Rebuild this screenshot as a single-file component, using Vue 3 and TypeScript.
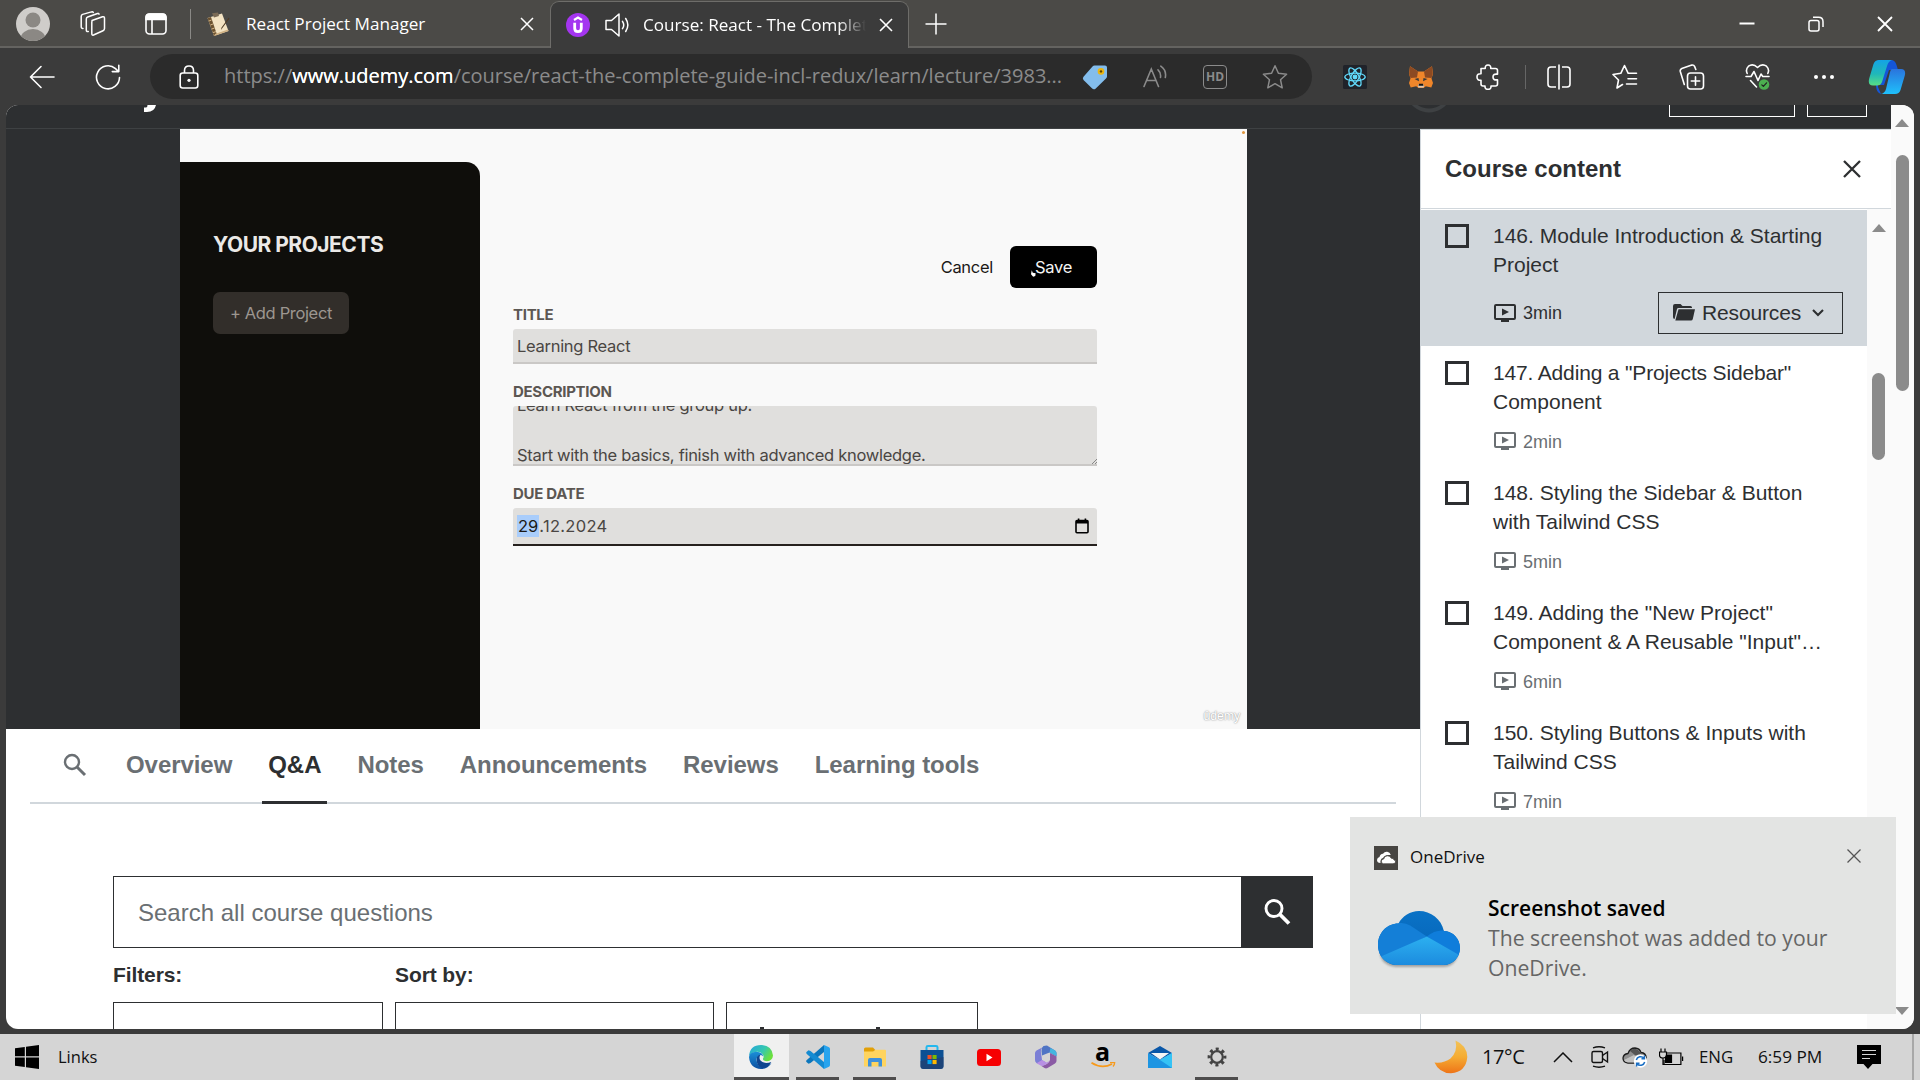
<script setup lang="ts">
interface Lecture {
  lines: string[]
  minutes: number
  current?: boolean
}

const lectures: Lecture[] = [
  { lines: ['146. Module Introduction & Starting', 'Project'], minutes: 3, current: true },
  { lines: ['147. Adding a "Projects Sidebar"', 'Component'], minutes: 2 },
  { lines: ['148. Styling the Sidebar & Button', 'with Tailwind CSS'], minutes: 5 },
  { lines: ['149. Adding the "New Project"', 'Component & A Reusable "Input"…'], minutes: 6 },
  { lines: ['150. Styling Buttons & Inputs with', 'Tailwind CSS'], minutes: 7 },
]

const tabs: string[] = ['Overview', 'Q&A', 'Notes', 'Announcements', 'Reviews', 'Learning tools']
const activeTab = 'Q&A'
</script>

<template>
  <div class="screen">
    <header class="tabstrip">
      <div class="strip-btn avatar">
        <svg width="34" height="34" viewBox="0 0 34 34">
          <defs><clipPath id="av"><circle cx="17" cy="17" r="17" /></clipPath></defs>
          <g clip-path="url(#av)">
            <rect width="34" height="34" fill="#cfcdca" />
            <circle cx="17" cy="13" r="7.5" fill="#8b8884" />
            <ellipse cx="17" cy="32" rx="12.5" ry="10" fill="#8b8884" />
          </g>
        </svg>
      </div>
      <div class="strip-btn ws">
        <svg width="26" height="26" viewBox="0 0 26 26" fill="none" stroke="#fff" stroke-width="1.5" stroke-linejoin="round" stroke-linecap="round">
          <path d="M12 9.5 L22.5 5.8 Q24.5 5.3 24.5 7.3 V17.5 Q24.5 19 23 19.7 L13.5 24 Q11.8 24.6 11.8 22.6 V11 Q11.8 9.8 13 9.2Z" />
          <path d="M8.3 20.5 Q6.3 21 6.3 19 V8 Q6.3 6.5 7.7 6 L17.5 2.5 Q18.8 2.2 19 3.2" />
          <path d="M3 17.5 Q1.2 17.6 1.2 15.5 V5.5 Q1.2 4 2.6 3.4 L11.5 .9 Q13 .7 13.3 1.5" />
        </svg>
      </div>
      <div class="strip-btn vt">
        <svg width="22" height="22" viewBox="0 0 22 22" fill="none" stroke="#fff" stroke-width="1.6">
          <rect x="1" y="1" width="20" height="20" rx="3.5" />
          <path d="M1 4.5 Q1 1 4.5 1 H17.5 Q21 1 21 4.5 V6.5 H1Z" fill="#fff" />
          <path d="M7 6 V21" />
        </svg>
      </div>
      <div class="strip-sep"></div>
      <div class="tab">
        <svg class="favicon" width="25" height="25" viewBox="0 0 25 25">
          <path d="M1.5 6 L16 1.5 L22.5 19 L8 24Z" fill="#f3e3c3" />
          <path d="M1.5 6 L5 5 L11 22.8 L8 24Z" fill="#6c5230" />
          <path d="M3 9 L5.5 8 M4.3 13 L7 12 M5.8 17 L8.5 16 M7 20.5 L10 19.7" stroke="#d8b98a" stroke-width="1" />
          <path d="M6 1.2 L12 .5 L13 4 L8 5.5Z" fill="#7a6a55" />
          <path d="M23.5 6.5 L16 16.5 L15 18 L15.4 15.8 L22.6 5.8Z" fill="#4f3b25" />
          <path d="M8 24 L22.5 19 L22 17.5 L9 22Z" fill="#d0b183" />
        </svg>
        <span class="tab-title t1">React Project Manager</span>
        <svg class="tab-x" width="14" height="14" viewBox="0 0 14 14" stroke="#fff" stroke-width="1.5"><path d="M1 1 13 13M13 1 1 13" /></svg>
      </div>
      <div class="tab active">
        <svg class="favicon" width="24" height="24" viewBox="0 0 24 24" fill="none">
          <circle cx="12" cy="12" r="12" fill="#a435f0" />
          <path d="M8.7 9.8 V15.2 Q8.7 18.7 12 18.7 Q15.3 18.7 15.3 15.2 V9.8" stroke="#fff" stroke-width="2.8" />
          <path d="M8 7 L12 4.5 L16 7" stroke="#fff" stroke-width="2.1" />
        </svg>
        <svg class="speaker" width="25" height="24" viewBox="0 0 25 24" fill="none" stroke="#fff" stroke-width="1.5" stroke-linejoin="round" stroke-linecap="round">
          <path d="M1 7.5 H6.5 L14 1 V23 L6.5 16.5 H1Z" />
          <path d="M17.5 8.3 Q20 12 17.5 15.7 M20.7 5.5 Q25 12 20.7 18.5" />
        </svg>
        <span class="tab-title t2">Course: React - The Complet</span>
        <svg class="tab-x" width="14" height="14" viewBox="0 0 14 14" stroke="#fff" stroke-width="1.6"><path d="M1 1 13 13M13 1 1 13" /></svg>
      </div>
      <svg class="newtab" width="22" height="22" viewBox="0 0 22 22" stroke="#fff" stroke-width="1.5"><path d="M11 0.5V21.5M.5 11H21.5" /></svg>
      <div class="wincontrols">
        <svg width="16" height="16" viewBox="0 0 16 16" stroke="#fff" stroke-width="2"><path d="M.5 7.5H15.5" /></svg>
        <svg width="16" height="16" viewBox="0 0 16 16" fill="none" stroke="#fff" stroke-width="1.5"><rect x="1" y="4.5" width="10" height="10.5" rx="2" /><path d="M5 1.2 H10.5 Q15 1.2 15 5.7 V11" /></svg>
        <svg width="16" height="16" viewBox="0 0 16 16" stroke="#fff" stroke-width="1.8"><path d="M1 1 15 15M15 1 1 15" /></svg>
      </div>
    </header>

    <div class="toolbar">
      <svg class="back" width="26" height="24" viewBox="0 0 26 24" fill="none" stroke="#fff" stroke-width="1.6" stroke-linecap="round" stroke-linejoin="round"><path d="M25 12H1.5M12 1.5 1.5 12 12 22.5" /></svg>
      <svg class="reload" width="26" height="26" viewBox="0 0 26 26" fill="none" stroke="#fff" stroke-width="1.6" stroke-linecap="round" stroke-linejoin="round"><path d="M24.5 13.5 A11.5 11.5 0 1 1 20.5 4.6 L23.5 7.5M23.8 1.3V7.6H17.3" /></svg>
      <div class="address">
        <svg class="lock" width="20" height="24" viewBox="0 0 20 24" fill="none" stroke="#fff" stroke-width="1.6"><rect x="1.2" y="8" width="17.6" height="15" rx="2.5" /><path d="M5.500 8V5.500Q5.500 1 10 1Q14.500 1 14.500 5.500V8" /><circle cx="10" cy="15.3" r="1.6" fill="#fff" stroke="none" /></svg>
        <p class="url">https://<b>www.udemy.com</b>/course/react-the-complete-guide-incl-redux/learn/lecture/3983...</p>
        <div class="ic60">
          <svg width="26" height="26" viewBox="0 0 26 26"><path d="M12.5 1.5 H23 Q25 1.5 25 3.5 V12.5 Q25 13.6 24 14.6 L13.5 24.7 Q11.7 26 10.2 24.6 L1.5 16 Q.2 14.3 1.5 12.8 L10.5 2.4 Q11.3 1.5 12.5 1.5Z" fill="#83bdec" /><circle cx="19" cy="7.4" r="3.3" fill="#eab511" /><circle cx="19" cy="7.4" r="1.2" fill="#594307" /></svg>
        </div>
        <div class="ic60">
          <svg width="24" height="24" viewBox="0 0 24 24" fill="none" stroke="#8b8b8b" stroke-width="1.6" stroke-linecap="round"><path d="M1 21.5 8.3 4 15.5 21.5M3.5 15.5H13M15 4.8Q18.2 7.6 17.5 12.5M17.8 1.2Q23.8 5.5 22.3 12.5" /></svg>
        </div>
        <div class="ic60"><span class="hd">HD</span></div>
        <div class="ic60">
          <svg width="26" height="26" viewBox="0 0 26 26" fill="none" stroke="#8b8b8b" stroke-width="1.5" stroke-linejoin="round"><path d="M13 1.8 16.4 9.3 24.6 10.2 18.5 15.7 20.2 23.8 13 19.7 5.8 23.8 7.5 15.7 1.4 10.2 9.6 9.3Z" /></svg>
        </div>
      </div>
      <div class="ext">
        <div class="ic66">
          <svg width="24" height="24" viewBox="0 0 24 24" fill="none" stroke="#61dafb" stroke-width="1.3"><rect width="24" height="24" rx="1.5" fill="#20232a" stroke="none" /><ellipse cx="12" cy="12" rx="10.2" ry="3.9" /><ellipse cx="12" cy="12" rx="10.2" ry="3.9" transform="rotate(60 12 12)" /><ellipse cx="12" cy="12" rx="10.2" ry="3.9" transform="rotate(120 12 12)" /><circle cx="12" cy="12" r="1.8" fill="#61dafb" /></svg>
        </div>
        <div class="ic66">
          <svg width="24" height="24" viewBox="0 0 24 24"><path d="M1 1.2 9 6.5H15L23 1.2 24 9 22.5 13.5 24 18 22.3 22.6 16.8 21.3 14.5 23H9.5L7.2 21.3 1.7 22.6 0 18 1.5 13.5 0 9Z" fill="#f0862a" /><path d="M1 1.2 9 6.5 8 12.5 1.5 13 .2 9Z M23 1.2 15 6.5 16 12.5 22.5 13 23.8 9Z" fill="#8c4a22" /><path d="M5.5 14 9.5 13 10 16.2ZM18.5 14 14.5 13 14 16.2Z" fill="#3a3a3a" /><path d="M9 19.5H15L14.8 22.5H9.2Z" fill="#d8c9bb" /><path d="M10 18.7H14L14.5 20.8H9.5Z" fill="#161616" /></svg>
        </div>
        <div class="ic66">
          <svg width="24" height="26" viewBox="0 0 24 26" fill="none" stroke="#fff" stroke-width="1.6" stroke-linejoin="round"><path d="M5 4.5H9.2Q9 1 12 1Q15 1 14.8 4.5H19.5Q21.5 4.5 21.5 6.5V10.2Q17 9.5 17 13Q17 16.5 21.5 15.8V20Q21.5 22 19.5 22H15Q15.2 25.3 12 25.3Q8.8 25.3 9 22H7Q5 22 5 20V16.3Q1 16.5 1 13Q1 9.5 5 9.8Z" /></svg>
        </div>
      </div>
      <div class="tool-sep"></div>
      <div class="ext">
        <div class="ic66">
          <svg width="24" height="26" viewBox="0 0 24 26" fill="none" stroke="#fff" stroke-width="1.6"><path d="M9 3H4Q1 3 1 6V20Q1 23 4 23H9M15 3H20Q23 3 23 6V20Q23 23 20 23H15M12 .5V25.5" /></svg>
        </div>
        <div class="ic66">
          <svg width="26" height="26" viewBox="0 0 26 26" fill="none" stroke="#fff" stroke-width="1.6" stroke-linecap="round" stroke-linejoin="round"><path d="M10.5 20.5 5 24 6.5 16 1 10.5 8.8 9.3 12.5 1.5 16.2 9.3H24.5M16 14.7H24.5M14.5 20H24.5" /></svg>
        </div>
        <div class="ic66">
          <svg width="26" height="26" viewBox="0 0 26 26" fill="none" stroke="#fff" stroke-width="1.6" stroke-linecap="round"><rect x="8.5" y="9" width="16" height="16" rx="3" /><path d="M16.5 12.8V21.2M12.3 17H20.7M5.3 20.5 1.3 7.5Q.8 5.3 2.8 4.4L12.8 1.1Q14.8.7 15.7 2.6L16.8 5.5" /></svg>
        </div>
        <div class="ic66">
          <svg width="26" height="28" viewBox="0 0 26 28" fill="none" stroke="#fff" stroke-width="1.6" stroke-linecap="round" stroke-linejoin="round"><path d="M2.2 10.5Q.2 6.5 3.5 3.2Q8 0 12.5 4.5Q17 0 21.5 3.2Q24.8 6.5 22.8 10.5M1 13.5H6L9 8.5 13 17.5 16 11 17.8 13.5H24M5.5 17.5 11.5 24" /><circle cx="19" cy="21.5" r="5.3" fill="#4caf50" stroke="none" /><path d="M16.8 21.8 18.4 23.4 21.6 19.8" stroke="#222" stroke-width="1.2" /></svg>
        </div>
        <div class="ic66">
          <svg width="22" height="6" viewBox="0 0 22 6" fill="#fff"><circle cx="3" cy="3" r="2" /><circle cx="11" cy="3" r="2" /><circle cx="19" cy="3" r="2" /></svg>
        </div>
        <div class="copilot">
          <svg width="38" height="34" viewBox="0 0 38 34">
            <defs>
              <linearGradient id="cpa" x1="0" y1="0" x2="0" y2="1"><stop offset="0" stop-color="#14a3e6" /><stop offset=".55" stop-color="#20b8b8" /><stop offset="1" stop-color="#58dd84" /></linearGradient>
              <linearGradient id="cpb" x1="0" y1="0" x2="0" y2="1"><stop offset="0" stop-color="#2a74dd" /><stop offset="1" stop-color="#1fc0fb" /></linearGradient>
            </defs>
            <path d="M10 0H23Q27 0 28.5 5L30 10H21L16 25H10V27L13 34Q9.5 33 8.5 29L8 26Z" fill="#1456d8" />
            <path d="M11 0H24Q20.5 1 19.2 5.5L14 22Q12.6 25.5 9 25.5H5Q-.5 25.5 1.2 18.5L5.5 4Q7 0 11 0Z" fill="url(#cpa)" />
            <path d="M24 9H33Q38.3 9 36.8 15.5L32.5 30Q31.3 34 27 34H13Q16.8 33.2 18 29L22 12Q22.8 9 24 9Z" fill="url(#cpb)" />
          </svg>
        </div>
      </div>
    </div>

    <main class="viewport">
      <div class="site">
        <div class="site-header">
          <svg class="logo-tail" width="14" height="7" viewBox="0 0 14 7"><path d="M4.5 0H13Q11.5 7 4 7H1V2.5H3Q4.5 2.5 4.5 0Z" fill="#fff" /></svg>
          <svg class="ring" width="42" height="9" viewBox="0 0 42 9" fill="none" stroke="#3e4143" stroke-width="4"><path d="M2 -6A21.5 21.5 0 0 0 40 -6" /></svg>
          <div class="hbtn wide"></div>
          <div class="hbtn"></div>
        </div>
        <div class="columns">
          <section class="left">
            <div class="stage">
              <div class="video">
                <aside class="projects">
                  <h2>YOUR PROJECTS</h2>
                  <span class="add">+ Add Project</span>
                </aside>
                <div class="form">
                  <div class="actions">
                    <span class="cancel">Cancel</span>
                    <span class="save">Save<svg class="cursor" width="5" height="7" viewBox="0 0 7 9"><path d="M1 0 2.5 3.5 6.5 4 6 8 3 9 0 5.5Z" fill="#fff" /></svg></span>
                  </div>
                  <label class="l-title">TITLE</label>
                  <div class="field f-title">Learning React</div>
                  <label class="l-desc">DESCRIPTION</label>
                  <div class="field f-desc">
                    <span>Learn React from the group up.</span><span>&nbsp;</span><span class="long">Start with the basics, finish with advanced knowledge.</span>
                    <svg class="grip" width="5" height="5" viewBox="0 0 5 5" stroke="#888" stroke-width="1"><path d="M0 5 5 0M3 5 5 3" /></svg>
                  </div>
                  <label class="l-date">DUE DATE</label>
                  <div class="field f-date">
                    <span class="sel">29</span><span class="rest">.12.2024</span>
                    <svg width="14" height="16" viewBox="0 0 14 16" fill="none" stroke="#000" stroke-width="1.6"><rect x="1" y="2.5" width="12" height="12.3" rx="1" /><path d="M1 4H13" stroke-width="3" /><path d="M3.6 .5V3M10.4 .5V3" /></svg>
                  </div>
                </div>
                <i class="spark"></i>
                <span class="watermark">ûdemy</span>
              </div>
            </div>
            <nav class="tabs">
              <svg class="tab-search" width="24" height="24" viewBox="0 0 24 24" fill="none" stroke="#6a6f73"><circle cx="9" cy="9" r="7" stroke-width="2.4" /><path d="M14 14 22 22" stroke-width="3" /></svg>
              <span v-for="t in tabs" :key="t" :class="['ctab', { on: t === activeTab }]">{{ t }}</span>
            </nav>
            <div class="qa">
              <div class="search">
                <div class="search-input">Search all course questions</div>
                <div class="search-btn">
                  <svg width="28" height="28" viewBox="0 0 28 28" fill="none" stroke="#fff"><circle cx="10" cy="10.500" r="8" stroke-width="2.9" /><path d="M15.500 16 25 25.500" stroke-width="3.8" /></svg>
                </div>
              </div>
              <div class="filters">
                <div class="filter a"><span class="flabel">Filters:</span><div class="select"></div></div>
                <div class="filter b"><span class="flabel">Sort by:</span><div class="select"></div></div>
                <div class="filter c"><span class="flabel"></span><div class="select peek"><i></i><i></i></div></div>
              </div>
            </div>
          </section>
          <aside class="content">
            <div class="content-head">
              <h2>Course content</h2>
              <svg width="18" height="18" viewBox="0 0 18 18" stroke="#2d2f31" stroke-width="2.3"><path d="M1 1 17 17M17 1 1 17" /></svg>
            </div>
            <div class="content-body">
              <ul>
                <li v-for="(l, i) in lectures" :key="i" :class="{ current: l.current }">
                  <span class="check"></span>
                  <div class="lecture">
                    <p v-for="line in l.lines" :key="line">{{ line }}</p>
                    <div class="meta">
                      <svg width="22" height="18" viewBox="0 0 22 18" fill="none" stroke="currentColor" stroke-width="2"><rect x="1" y="1" width="20" height="14" rx="1" /><path d="M8 4.5 15 8 8 11.5Z" fill="currentColor" stroke="none" /><path d="M7 16.5H15" stroke-width="3" /></svg>
                      <span>{{ l.minutes }}min</span>
                      <div v-if="l.current" class="resources">
                        <svg width="22" height="17" viewBox="0 0 22 17"><path d="M0 2Q0 0 2 0H7.5L9.5 2H17.5Q19 2 19 3.5V4H5.5Q4.3 4 4 5L1.6 15Q0 15 0 13Z" fill="#2d2f31" /><path d="M5.5 5.3H22L19.8 15Q19.3 16.5 18 16.5H2.3Z" fill="#2d2f31" /></svg>
                        <span>Resources</span>
                        <svg class="chev" width="12" height="8" viewBox="0 0 12 8" fill="none" stroke="#2d2f31" stroke-width="2.1"><path d="M1 1 6 6 11 1" /></svg>
                      </div>
                    </div>
                  </div>
                </li>
              </ul>
              <div class="scroll inner">
                <i class="up"></i><i class="thumb"></i>
              </div>
            </div>
          </aside>
        </div>
      </div>
      <div class="scroll outer">
        <i class="up"></i><i class="thumb"></i><i class="down"></i>
      </div>
    </main>

    <footer class="taskbar">
      <div class="start">
        <svg width="24" height="24" viewBox="0 0 24 24" fill="#000"><path d="M0 3.3 9.8 2V11.3H0ZM11 1.8 24 0V11.3H11ZM0 12.6H9.8V22L0 20.7ZM11 12.6H24V24L11 22.2Z" /></svg>
        <span>Links</span>
      </div>
      <div class="apps">
        <div class="app open focus">
          <svg width="24" height="24" viewBox="0 0 24 24">
            <defs>
              <linearGradient id="eg1" x1="0" y1="0" x2="1" y2=".5"><stop offset="0" stop-color="#25a5dd" /><stop offset=".6" stop-color="#35c7b0" /><stop offset="1" stop-color="#6be03e" /></linearGradient>
              <linearGradient id="eg2" x1="0" y1="0" x2="0" y2="1"><stop offset="0" stop-color="#1a8fd8" /><stop offset="1" stop-color="#0d4fa0" /></linearGradient>
            </defs>
            <path d="M0 11Q1 0 12 0Q23 .5 24 10.5Q23.5 15.8 18 16.2Q13.5 16 14 13.5Q15.5 11.5 13.5 9Q11.5 6.5 8 6.7Q2.5 7 0 11Z" fill="url(#eg1)" />
            <path d="M0 12Q.5 7 7.5 6.7Q13.5 7 14.3 11.5Q11.5 8 8 12.5Q6.5 17 10 20.5Q15 24 22.5 18Q19 24 12 24Q1 23.5 0 12Z" fill="url(#eg2)" />
            <path d="M8 12Q9 10 11.5 9.5Q9.5 13 11.5 15.5Q15 19.5 22.3 17Q19 23.5 13 23Q6.5 20.5 8 12Z" fill="#0f458f" />
          </svg>
        </div>
        <div class="app open">
          <svg width="24" height="24" viewBox="0 0 24 24"><path d="M18 0 23 2.3Q24 3 24 4V20Q24 21 23 21.7L18 24Z" fill="#27a4ee" /><path d="M18 0V7L4.5 18 2.5 18.7.5 17Q-.3 16 .8 15Z" fill="#0b76bc" /><path d="M18 24V17L4.5 6 2.5 5.3.5 7Q-.3 8 .8 9Z" fill="#148bd2" /></svg>
        </div>
        <div class="app open">
          <svg width="24" height="20" viewBox="0 0 24 20"><path d="M1 2Q1 .5 2.5.5H10L12.5 3.2 10 5H1Z" fill="#e2a008" /><path d="M1 4.5H10.5L12.3 2.8H22Q23 2.8 23 4V19.5H1Z" fill="#ffd45f" /><path d="M5 19.5V13Q5 11 7 11H17Q19 11 19 13V19.5H15.5V15H8.5V19.5Z" fill="#3f91dc" /></svg>
        </div>
        <div class="app">
          <svg width="24" height="24" viewBox="0 0 24 24"><path d="M6.5 6V2.3Q6.5 1 8 1H16Q17.5 1 17.5 2.3V6" fill="none" stroke="#24b8ee" stroke-width="2" /><path d="M.5 5H23.5V21Q23.5 24 20.5 24H3.5Q.5 24 .5 21Z" fill="#0d5094" /><path d="M.5 16 23.5 12V21Q23.5 24 20.5 24H3.5Q.5 24 .5 21Z" fill="#243f6d" opacity=".7" /><path d="M7.5 10H11.6V14.1H7.5Z" fill="#f25022" /><path d="M12.5 10H16.6V14.1H12.5Z" fill="#7fba00" /><path d="M7.5 15H11.6V19.1H7.5Z" fill="#00a4ef" /><path d="M12.5 15H16.6V19.1H12.5Z" fill="#ffb900" /></svg>
        </div>
        <div class="app">
          <svg width="24" height="17" viewBox="0 0 24 17"><rect width="24" height="17" rx="3.5" fill="#f60002" /><path d="M9.5 4.8 15.5 8.5 9.5 12.2Z" fill="#fff" /></svg>
        </div>
        <div class="app">
          <svg width="22" height="24" viewBox="0 0 22 24"><path d="M11 .5 7 3Q5 5 6.5 11L7 15 11 17.5 8 20.5 1.5 18Q0 17 0 15V8Q0 6.5 1.5 5.5Z" fill="#7b7fd6" /><path d="M8.5 1 12 .5 20 5.5Q21.5 6.5 21.5 8V11.5L14.5 7.5 7 10.5 6.5 6Q6.5 2.5 8.5 1Z" fill="#4f74c4" /><path d="M14.5 7.5 21.5 11.3V8Q21.5 6.5 20 5.5L15.5 3Z" fill="#45b5e0" /><path d="M15 8 21.5 11.5V16Q21.5 17.5 20 18.4L12.5 23Q11 23.8 9.5 23L6.5 21Q13.5 19.5 15 15Z" fill="#8b5ba5" /><path d="M1.5 18.2 7 15 11.5 17.5 14.5 16Q12 20 6.5 21Z" fill="#b890e4" /></svg>
        </div>
        <div class="app">
          <div class="amazon">
            <span>a</span>
            <svg width="26" height="6" viewBox="0 0 26 6"><path d="M1.5 .8Q12 7.500 22 2" fill="none" stroke="#f79a1c" stroke-width="1.7" /><path d="M20 .6H24.700Q24.700 2.500 23 4.500" fill="none" stroke="#f79a1c" stroke-width="1.3" /></svg>
          </div>
        </div>
        <div class="app">
          <svg width="24" height="22" viewBox="0 0 24 22"><path d="M0 7 12 0 24 7 12 14Z" fill="#0a57a8" /><path d="M0 7 12 14 24 7V22H0Z" fill="#1d95e2" /><path d="M24 7V22L12 14Z" fill="#35c3f5" /><path d="M3 7H21L12 13.500Z" fill="#f5f5f5" /></svg>
        </div>
        <div class="app open">
          <svg width="20" height="20" viewBox="0 0 20 20" fill="none" stroke="#444"><circle cx="10" cy="10" r="5.8" stroke-width="2.2" /><circle cx="10" cy="10" r="7.9" stroke-width="3" stroke-dasharray="3 3.200" stroke-dashoffset="1.5" /></svg>
        </div>
      </div>
      <div class="tray">
        <svg class="moon" width="34" height="34" viewBox="0 0 34 34"><defs><linearGradient id="mn" x1="0" y1="0" x2="0" y2="1"><stop offset="0" stop-color="#f2c257" /><stop offset=".5" stop-color="#f5ac33" /><stop offset="1" stop-color="#ee7418" /></linearGradient></defs><path d="M21.5 .5Q33 5.5 33.3 17Q32 32 17 33.3Q5 33 .5 22.5Q10 23.5 16.5 18.5Q24 11.5 21.5 .5Z" fill="url(#mn)" /></svg>
        <span class="temp">17°C</span>
        <svg class="caret" width="20" height="11" viewBox="0 0 20 11" fill="none" stroke="#111" stroke-width="1.5"><path d="M1 10 10 1 19 10" /></svg>
        <svg class="cam" width="18" height="22" viewBox="0 0 18 22" fill="none" stroke="#111" stroke-width="1.4"><rect x="1" y="5.5" width="10.5" height="11" rx="1.5" /><path d="M11.5 9.5 16.5 6V16L11.5 12.5M2 1.8Q8 -.2 14 1.8M2 20.2Q8 22.2 14 20.2" /></svg>
        <svg class="cloud" width="26" height="22" viewBox="0 0 26 22"><path d="M6 17Q1 16.5 1 12Q1.5 8 6 7.5Q8 2 13 2Q17.5 2.2 19 6.5Q24 7 24.3 12Q24 17 19 17Z" fill="#8f8f8f" stroke="#1c1c1c" stroke-width="1.3" /><path d="M2 14 12 9 19 16.5H6Q3 16 2 14Z" fill="#c2c2c2" /><path d="M8 5Q13 0 18 6L21 9 13 9Z" fill="#555" /><circle cx="18.5" cy="15" r="6.7" fill="#fff" /><path d="M14.3 14A4.4 4.4 0 0 1 22 12.3M22.7 16A4.4 4.4 0 0 1 15 17.7M22.4 9.5V12.7H19.5M14.6 20.5V17.3H17.5" fill="none" stroke="#1a6fc4" stroke-width="1.5" /></svg>
        <svg class="batt" width="25" height="18" viewBox="0 0 25 18" fill="none" stroke="#000" stroke-width="1.2"><path d="M8 5H21.9V16.5H5V12M23.6 8.5V13" /><path d="M7.5 7H12.5V14.5H6.5V11Z" fill="#000" /><path d="M2 .5V4M6 .5V4M.5 4H7.5V7Q7.5 10 4 10Q.5 10 .5 7ZM4 10V16.5H6" /></svg>
        <span class="lang">ENG</span>
        <span class="clock">6:59 PM</span>
        <svg class="note" width="24" height="24" viewBox="0 0 24 24"><path d="M0 0H24V19H15.5L11 24 6.5 19H0Z" fill="#000" /><path d="M5 5.5H19M5 9.5H19M5 13.5H13" stroke="#d5d5d5" stroke-width="1.2" /></svg>
        <i class="peekline"></i>
      </div>
    </footer>

    <div class="toast">
      <div class="toast-head">
        <svg width="24" height="24" viewBox="0 0 24 24"><rect width="24" height="24" fill="#474542" /><path d="M6.5 17Q3 16.8 3 14Q3.2 11.5 5.5 11Q6 8 9 7.8Q10.5 5.5 13.2 5.8Q16 6.2 16.8 9L13 9Q9.5 10 9 12Q6 12.8 6.5 17Z" fill="#fff" /><path d="M9.5 17.8Q7 17.5 7.3 15Q7.6 13.2 9.7 13Q10.3 9.8 13.5 9.8Q16.3 9.8 17.2 12.2Q20 12 20 14Q22 14.2 21.6 16Q21.3 17.8 19 17.8Z" fill="#fff" stroke="#474542" stroke-width=".8" /></svg>
        <span>OneDrive</span>
        <svg class="toast-x" width="14" height="14" viewBox="0 0 14 14" stroke="#555" stroke-width="1.3"><path d="M.5 .5 13.5 13.5M13.5 .5 .5 13.5" /></svg>
      </div>
      <div class="toast-body">
        <svg width="82" height="60" viewBox="0 0 84 60" preserveAspectRatio="none">
          <defs>
            <clipPath id="cl"><path d="M20 54C9 54 0 46 0 34C0 22 9 12.500 21 12.500C25 5 33 0 42 0C54 0 65 8 67.500 20C77 20 84 28 84 37C84 46 77 54 67 54Z" /></clipPath>
            <filter id="sh" x="-10%" y="-10%" width="120%" height="130%"><feGaussianBlur stdDeviation="1.2" /></filter>
            <linearGradient id="c1" x1="0" y1="0" x2="0" y2="1"><stop offset="0" stop-color="#0a72c6" /><stop offset="1" stop-color="#0461b4" /></linearGradient>
            <linearGradient id="c2" x1="0" y1="0" x2="0" y2="1"><stop offset="0" stop-color="#2cb0f0" /><stop offset="1" stop-color="#1a86dc" /></linearGradient>
          </defs>
          <path d="M18 56Q3 54 2 42H82Q80 55 68 56Z" fill="#777" opacity=".6" filter="url(#sh)" />
          <g clip-path="url(#cl)">
            <rect width="84" height="58" fill="url(#c1)" />
            <path d="M0 12H24Q29 12 33 14.5L50 25.5 0 50Z" fill="#147fd7" />
            <path d="M50 25.5Q58 18.5 68 19.5L84 25V48Z" fill="#0f7ddb" />
            <path d="M50 25.5 3 45.5V58H84V44.5Z" fill="url(#c2)" />
          </g>
        </svg>
        <div class="toast-text">
          <p class="tt">Screenshot saved</p>
          <p class="tb1">The screenshot was added to your</p>
          <p class="tb2">OneDrive.</p>
        </div>
      </div>
    </div>
  </div>
</template>

<style>
html,
body {
  margin: 0;
  background: #3b3b3b;
  overflow: hidden;
}
</style>

<style scoped>
* {
  box-sizing: border-box;
}
.screen {
  position: relative;
  width: 1920px;
  height: 1080px;
  display: flex;
  flex-direction: column;
  background: #3b3b3b;
  font-family: 'Open Sans', 'Noto Sans', sans-serif;
  overflow: hidden;
}
svg {
  display: block;
  flex: none;
}
p,
h2,
ul {
  margin: 0;
  padding: 0;
}
i {
  display: block;
}

/* browser tab strip */
.tabstrip {
  height: 48px;
  flex: none;
  display: flex;
  align-items: center;
  background: #4b4a47;
  box-shadow: inset 0 -2px #646360;
}
.avatar { margin-left: 16px; }
.ws { margin-left: 30px; }
.vt { margin-left: 39px; }
.strip-sep {
  width: 1px;
  height: 30px;
  margin-left: 23px;
  background: #8a8986;
}
.tab {
  display: flex;
  align-items: center;
  width: 359px;
  height: 47px;
  padding-left: 15px;
}
.tab.active {
  align-self: flex-end;
  padding-left: 15px;
  background: #3b3b3b;
  border: 1px solid #6e6d6a;
  border-bottom: 0;
  border-radius: 9px 9px 0 0;
}
.tab-title {
  padding-bottom: 2px;
  color: #fff;
  font-size: 17.1px;
  white-space: nowrap;
  overflow: hidden;
}
.t1 {
  width: 274px;
  margin-left: 15px;
}
.t2 {
  width: 224px;
  margin-left: 13px;
  -webkit-mask: linear-gradient(90deg, #000 195px, transparent 223px);
  mask: linear-gradient(90deg, #000 195px, transparent 223px);
}
.speaker { margin-left: 15px; }
.t2 + .tab-x { margin-left: 12px; }
.newtab { margin-left: 16px; }
.wincontrols {
  display: flex;
  gap: 53px;
  margin-left: auto;
  margin-right: 27px;
}

/* browser toolbar */
.toolbar {
  height: 57px;
  flex: none;
  display: flex;
  align-items: center;
}
.back { margin-left: 29px; }
.reload { margin-left: 40px; }
.address {
  width: 1162px;
  height: 45px;
  margin-left: 29px;
  border-radius: 23px;
  background: #2b2b2b;
  display: flex;
  align-items: center;
}
.lock { margin-left: 29px; }
.url {
  width: 866px;
  flex: none;
  margin-left: 25px;
  padding-bottom: 2px;
  color: #8b8b8b;
  font-size: 20px;
  white-space: nowrap;
}
.url b {
  font-weight: 400;
  color: #fff;
  text-shadow: 0 0 .4px #fff;
}
.ic60 {
  width: 60px;
  display: flex;
  justify-content: center;
  flex: none;
}
.url + .ic60 { margin-left: -25px; }
.hd {
  width: 24px;
  height: 24px;
  border: 1.5px solid #8b8b8b;
  border-radius: 4px;
  color: #8b8b8b;
  font: 700 12px/21px 'Open Sans', sans-serif;
  text-align: center;
}
.ext { display: flex; align-items: center; }
.ic66 {
  width: 66.3px;
  display: flex;
  justify-content: center;
}
.address + .ext { margin-left: 10px; }
.tool-sep {
  width: 1px;
  height: 24px;
  margin-left: 4px;
  background: #666;
}
.copilot { margin-left: 11px; }

/* page viewport */
.viewport {
  width: 1908px;
  height: 924px;
  flex: none;
  margin: 0 6px;
  display: flex;
  background: #fff;
  border-radius: 12px;
  overflow: hidden;
  font-family: 'Liberation Sans', Arial, sans-serif;
  color: #2d2f31;
}
.site { width: 1885px; flex: none; }
.site-header {
  height: 24px;
  display: flex;
  align-items: flex-start;
  background: #2d2f31;
  border-bottom: 1px solid #3e4143;
}
.logo-tail { margin-left: 137px; }
.ring { margin-left: 1251px; }
.hbtn {
  width: 60px;
  height: 12px;
  margin-left: 12px;
  border: 1px solid #fff;
  border-top: 0;
}
.hbtn.wide { width: 126px; margin-left: 219px; }
.columns { display: flex; height: 900px; }
.left { width: 1414px; flex: none; }
.stage {
  height: 600px;
  padding-left: 174px;
  background: #2d2f31;
}

/* lesson video frame */
.video {
  position: relative;
  width: 1067px;
  height: 600px;
  padding-top: 33px;
  display: flex;
  background: #f9f9f9;
  font-family: Inter, sans-serif;
}
.projects {
  width: 300px;
  height: 567px;
  flex: none;
  padding: 71px 0 0 33px;
  background: #0f0e0b;
  border-radius: 0 14px 0 0;
}
.projects h2 {
  color: #ebe9e7;
  font-size: 21px;
  line-height: 24px;
  font-weight: 700;
  letter-spacing: -0.5px;
}
.add {
  display: block;
  width: 136px;
  height: 42px;
  margin-top: 35px;
  background: #322e2a;
  border-radius: 7px;
  color: #9c9690;
  font-size: 16.5px;
  line-height: 42px;
  letter-spacing: -0.35px;
  text-align: center;
}
.form {
  width: 584px;
  margin-left: 33px;
  color: #4a4643;
  font-size: 16.5px;
  letter-spacing: -0.29px;
}
.actions {
  display: flex;
  justify-content: flex-end;
  align-items: center;
  gap: 17px;
  margin-top: 83px;
  height: 43px;
  color: #1c1917;
}
.save {
  position: relative;
  width: 87px;
  height: 42px;
  border-radius: 6px;
  background: #000;
  color: #f5f5f4;
  line-height: 42px;
  text-align: center;
}
.cursor {
  position: absolute;
  left: 21px;
  top: 24px;
}
.form label {
  display: block;
  height: 18px;
  color: #5c5753;
  font-size: 15px;
  line-height: 18px;
  font-weight: 650;
}
.l-title { margin-top: 18px; }
.field {
  height: 35px;
  padding-left: 4px;
  background: #e0dfdd;
  border-bottom: 2px solid #cac8c6;
  border-radius: 3px 3px 0 0;
  white-space: nowrap;
}
.f-title { margin-top: 5px; line-height: 34px; }
.l-desc { margin-top: 19px; }
.f-desc {
  position: relative;
  height: 60px;
  margin-top: 5px;
  overflow: hidden;
}
.f-desc span {
  display: block;
  height: 25px;
  line-height: 25px;
}
.f-desc span:first-child { margin-top: -13.5px; }
.grip {
  position: absolute;
  right: 0;
  bottom: 0;
}
.l-date { margin-top: 19px; }
.f-date {
  display: flex;
  align-items: center;
  height: 38px;
  margin-top: 5px;
  padding-right: 8px;
  border-bottom-color: #26211e;
}
.sel {
  padding: 0 1px;
  background: #a9cdfb;
  color: #1c1917;
  line-height: 22px;
  letter-spacing: 0;
}
.rest { flex: 1; letter-spacing: .3px; }
.spark {
  position: absolute;
  right: 2px;
  top: 2px;
  width: 3px;
  height: 3px;
  border-radius: 2px;
  background: #e0973f;
}
.watermark {
  position: absolute;
  right: 7px;
  bottom: 5px;
  color: #fff;
  font: 12.5px/15px 'Liberation Sans', sans-serif;
  letter-spacing: -0.2px;
  text-shadow: 0 0 2px #999, 0 0 1px #aaa;
}

/* course tabs and Q&A */
.tabs {
  display: flex;
  height: 75px;
  margin: 0 24px;
  box-shadow: inset 0 -2px #d1d7dc;
}
.tab-search { margin: 24px 33px 0 33px; }
.ctab {
  height: 75px;
  margin-right: 24px;
  padding: 0 6px;
  color: #6a6f73;
  font-size: 24px;
  font-weight: 700;
  line-height: 72px;
  letter-spacing: -0.06px;
  white-space: nowrap;
}
.ctab.on {
  color: #2d2f31;
  box-shadow: inset 0 -3px #2d2f31;
}
.qa { padding: 72px 0 0 107px; }
.search { display: flex; width: 1200px; height: 72px; }
.search-input {
  width: 1129px;
  padding-left: 24px;
  border: 1px solid #2d2f31;
  color: #6a6f73;
  font-size: 24px;
  line-height: 72px;
}
.search-btn {
  width: 71px;
  display: flex;
  align-items: center;
  justify-content: center;
  background: #2d2f31;
}
.filters { display: flex; gap: 12px; }
.filter.a { width: 270px; }
.filter.b { width: 319px; }
.filter.c { width: 252px; }
.flabel {
  display: block;
  height: 54px;
  font-size: 21px;
  line-height: 54px;
  font-weight: 700;
  letter-spacing: -0.1px;
}
.select { height: 72px; border: 1px solid #2d2f31; }
.peek { display: flex; gap: 112px; padding: 24px 0 0 33px; }
.peek i {
  width: 4px;
  height: 8px;
  flex: none;
  background: #2d2f31;
}

/* course content panel */
.content {
  width: 471px;
  border-left: 1px solid #d1d7dc;
  border-top: 1px solid #d1d7dc;
  background: #fff;
}
.content-head {
  display: flex;
  align-items: center;
  justify-content: space-between;
  height: 79px;
  padding: 0 30px 0 24px;
  border-bottom: 1px solid #d1d7dc;
}
.content-head h2 { font-size: 24px; line-height: 30px; }
.content-body { display: flex; }
.content-body ul { width: 446px; list-style: none; }
li {
  display: flex;
  align-items: flex-start;
  height: 120px;
  padding: 12px 24px 0;
}
li.current {
  height: 137px;
  padding-top: 11px;
  border-top: 1px solid #fff;
  background: #d1d7dc;
}
.check {
  width: 24px;
  height: 24px;
  margin: 3px 24px 0 0;
  border: 3px solid #2d2f31;
  flex: none;
}
.lecture { flex: 1; }
.lecture p {
  font-size: 21px;
  line-height: 29.4px;
  white-space: nowrap;
}
li:nth-child(2) p:first-child { letter-spacing: -0.16px; }
.meta {
  display: flex;
  align-items: center;
  height: 25px;
  margin-top: 12px;
  color: #6a6f73;
  font-size: 18px;
}
.meta > svg { margin-left: 1px; }
.meta > span { margin-left: 7px; padding-top: 2px; }
.current .meta { height: 42px; color: #2d2f31; }
.resources {
  display: flex;
  align-items: center;
  width: 185px;
  height: 42px;
  margin-left: auto;
  padding-left: 14px;
  border: 1px solid #2d2f31;
  font-size: 21px;
  letter-spacing: -0.15px;
}
.resources span { margin-left: 7px; }
.chev { margin-left: 11px; }

/* scrollbars */
.scroll {
  display: flex;
  flex-direction: column;
  align-items: center;
  padding-right: 1px;
  background: #fafafa;
}
.inner { width: 24px; height: 820px; }
.outer { width: 23px; height: 924px; }
.up {
  border: 7.5px solid transparent;
  border-top: 0;
  border-bottom: 8px solid #8b8b8b;
}
.down {
  border: 7px solid transparent;
  border-bottom: 0;
  border-top: 8px solid #8b8b8b;
}
.thumb {
  width: 13px;
  border-radius: 7px;
  background: #8b8b8b;
}
.inner .up { margin-top: 15px; }
.inner .thumb { height: 87px; margin-top: 141px; }
.outer .up { margin-top: 14px; }
.outer .thumb { height: 236px; margin-top: 28px; }
.outer .down { margin-top: 616px; }

/* taskbar */
.taskbar {
  display: flex;
  height: 46px;
  margin-top: 5px;
  flex: none;
  background: #d5d5d5;
  color: #111;
  font-size: 17px;
  line-height: 46px;
}
.start {
  display: flex;
  align-items: center;
  width: 734px;
  padding-left: 15px;
}
.start span { margin-left: 19px; font-size: 16.5px; }
.apps { display: flex; width: 511px; }
.app {
  position: relative;
  width: 57px;
  height: 46px;
  display: flex;
  flex: none;
  align-items: center;
  justify-content: center;
}
.app:first-child { width: 55px; padding-right: 1px; }
.app.open { background: linear-gradient(#4e4d4d, #4e4d4d) center bottom / 43px 3px no-repeat; }
.app.focus { background: linear-gradient(#4e4d4d, #4e4d4d) center bottom / 55px 3px no-repeat #f0f0f0; }
.amazon {
  display: flex;
  flex-direction: column;
  align-items: center;
  width: 26px;
}
.amazon span {
  height: 17px;
  margin-top: -2px;
  color: #000;
  font-size: 25px;
  font-weight: 700;
  line-height: 12px;
}
.tray { display: flex; align-items: center; flex: 1; white-space: nowrap; }
.moon { margin-left: 189px; }
.temp { width: 42px; margin-left: 14px; font-size: 20px; letter-spacing: -0.4px; }
.caret { margin-left: 29px; }
.cam { margin-left: 18px; }
.cloud { margin-left: 13px; }
.batt { margin-left: 11px; }
.lang { width: 33px; margin-left: 15px; font-size: 16.8px; }
.clock { width: 66px; margin-left: 26px; font-size: 17.2px; }
.note { margin-left: 33px; }
.peekline { width: 2px; height: 46px; margin-left: 31px; background: #a8a8a8; }

/* notification */
.toast {
  position: absolute;
  left: 1350px;
  top: 817px;
  width: 546px;
  height: 197px;
  background: #e3e4e3;
}
.toast-head {
  display: flex;
  align-items: center;
  height: 24px;
  margin-top: 29px;
  padding: 0 35px 0 24px;
  font-size: 17px;
  color: #111;
}
.toast-head span { margin-left: 12px; padding-bottom: 2px; line-height: 22px; }
.toast-x { margin: 0 0 4px auto; }
.toast-body { display: flex; margin-top: 23px; padding-left: 28px; }
.toast-body > svg { margin-top: 18px; }
.toast-text {
  margin-left: 28px;
  color: #666;
  font-size: 21.2px;
  line-height: 30px;
  white-space: nowrap;
}
.tt { color: #000; font-size: 21px; font-weight: 600; }
</style>
